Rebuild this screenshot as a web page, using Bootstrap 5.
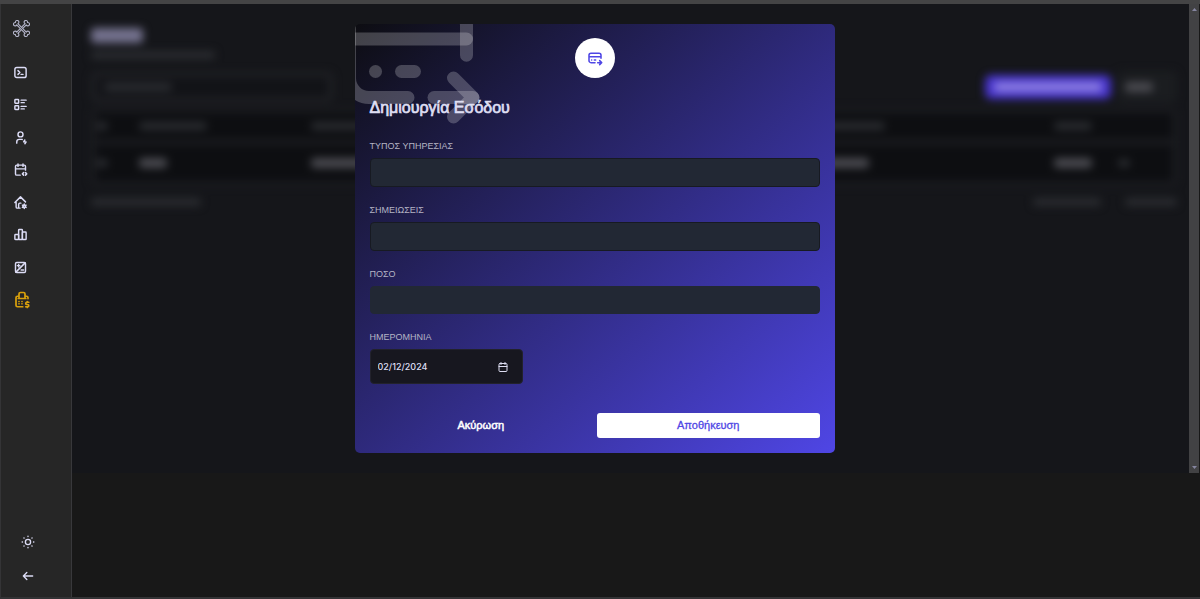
<!DOCTYPE html>
<html lang="el" data-bs-theme="dark">
<head>
<meta charset="utf-8">
<meta name="viewport" content="width=device-width, initial-scale=1">
<title>Δημιουργία Εσόδου</title>
<link href="https://cdn.jsdelivr.net/npm/bootstrap@5.3.0/dist/css/bootstrap.min.css" rel="stylesheet">
<style>
:root { --side: 72px; }
body { background: #181818; font-family: "Liberation Sans", Arial, sans-serif; font-size: 9px; line-height: 14px; border-top: 4px solid #444445; border-bottom: 2px solid #333335; }
.ico { fill: none; stroke: currentColor; stroke-width: 2.3; stroke-linecap: round; stroke-linejoin: round; display: block; }
.side { width: var(--side); background: #262626; border-left: 1px solid #343436; border-right: 1px solid #38383b; padding: 16px 12px 12px; z-index: 2; }
.side a { color: #dcdcf5; display: flex; align-items: center; }
.side a.active { color: #d8a00c; }
.side .brand { color: #b4b5ca; margin-bottom: 19px; }
.brand .ico { stroke-width: 1.3; }
.menu { display: grid; grid-auto-rows: 1fr; height: 260px; }
.stage { display: grid; grid-template-columns: minmax(0, 1fr) 10px; margin-right: 1px; align-self: flex-start; background: #15161a; }
.stage > * { grid-row: 1; }
.rail { grid-column: 2; background: #424244; color: #85859f; padding: 2px 0; }
.behind { grid-column: 1; padding: 24px 12px 0 19px; filter: blur(4px); overflow: hidden; }
.overlay { grid-column: 1; margin-left: calc(-1 * var(--side)); padding: 20px 0; z-index: 3; pointer-events: none; }
.dialog-box { width: 480px; max-width: 100%; padding: 14px 15px 15px; border-radius: 5px; overflow: hidden; position: relative; pointer-events: auto; background: linear-gradient(to bottom right, #0d0d12, #4f46e5); }
.watermark { position: absolute; left: -25px; top: -50px; stroke: rgba(255, 255, 255, .22); stroke-width: 2; }
.round-icon { width: 40px; height: 40px; background: #fff; color: #4f46e5; }
.dialog-box h1 { font-size: 16px; line-height: 20px; font-weight: 400; -webkit-text-stroke: 0.7px; color: #dedef2; margin: 20px 0 21px; position: relative; }
.dialog-box label { display: block; color: #b4b4c4; margin-bottom: 5px; }
.field { margin-bottom: 16px; }
.field .form-control { height: 29px; background: #222834; border: 1px solid #171a22; border-radius: 4px; font-size: 10px; padding: 0 7px; color: #dedef2; }
.field .amount-box { height: 28px; border-color: #222834; }
.field .date-box { width: 153px; height: 35px; background: #17171f; border-color: #22222c; font-family: Inter, sans-serif; font-size: 9px; font-weight: 500; color-scheme: dark; }
.date-box::-webkit-calendar-picker-indicator { width: 12px; height: 12px; padding: 0; margin-right: 6px; background: url("data:image/svg+xml,%3Csvg xmlns='http://www.w3.org/2000/svg' viewBox='0 0 24 24' fill='none' stroke='%23dedef2' stroke-width='2' stroke-linecap='round' stroke-linejoin='round'%3E%3Crect x='4' y='5' width='16' height='16' rx='2'/%3E%3Cpath d='M16 3v4M8 3v4M4 11h16'/%3E%3C/svg%3E") center / contain no-repeat; }
.actions { display: grid; grid-template-columns: 1fr 1fr; gap: 5px; margin-top: 29px; }
.actions .btn { height: 25px; padding: 0; border: 0; border-radius: 3px; font-size: 11px; font-weight: 400; line-height: 25px; color: #fff; -webkit-text-stroke: 0.5px; }
.actions .btn-save { background: #fff; color: #4f46e5; -webkit-text-stroke: 0.3px; }
.smudge { display: block; border-radius: 4px; height: 8px; background: #2a2c30; }
.smudge.bright { background: #4a4a50; height: 10px; }
.w20 { width: 12px; } .w30 { width: 28px; } .w40 { width: 38px; } .w50 { width: 52px; } .w60 { width: 68px; } .w110 { width: 110px; } .w125 { width: 124px; }
.smudge.heading { width: 52px; height: 15px; background: #74728e; }
.ghost-top { margin-top: 12px; }
.ghost-search { width: 242px; height: 30px; border: 5px solid #202125; border-radius: 6px; background: #121317; padding: 6px 8px; }
.ghost-add { width: 126px; height: 24px; border-radius: 6px; background: #4734cc; padding: 7px 9px; margin-right: 6px; }
.ghost-add .smudge { background: #8a7ce0; height: 10px; }
.ghost-more { width: 60px; height: 32px; border-radius: 6px; background: #1b1d20; padding: 11px 8px; }
.ghost-list { border: 5px solid #1b1c20; border-radius: 6px; margin-top: 5px; }
.ghost-row { display: grid; grid-template-columns: 4% 16% 47% 22% 6% 5%; align-items: center; background: #0d0e11; height: 26px; }
.ghost-row + .ghost-row { border-top: 6px solid #1b1c20; height: 42px; }
.ghost-foot { margin-top: 12px; }
</style>
</head>
<body class="min-vh-100 d-flex">
<nav class="side d-flex flex-column flex-shrink-0" aria-label="Main">
  <a class="brand" href="#" aria-label="Home"><svg class="ico" width="17" height="17" viewBox="2 2 20 20"><path transform="rotate(45 12 12)" d="M5 11H19a2 2 0 1 1 3 1 2 2 0 1 1-3 1H5a2 2 0 1 1-3-1 2 2 0 1 1 3-1z"/><path transform="rotate(-45 12 12)" d="M10 11H5a2 2 0 1 0-3 1 2 2 0 1 0 3 1h5M14 11h5a2 2 0 1 1 3 1 2 2 0 1 1-3 1h-5"/></svg></a>
  <div class="menu">
    <a href="#" aria-label="Terminal"><svg class="ico" width="15" height="15" viewBox="0 0 24 24"><path d="M8 9l3 3-3 3M13 15h3"/><rect x="3" y="4" width="18" height="16" rx="3"/></svg></a>
    <a href="#" aria-label="List"><svg class="ico" width="15" height="15" viewBox="0 0 24 24"><path d="M13 5h8M13 9h5M13 15h8M13 19h5"/><rect x="3" y="4" width="6" height="6" rx="1"/><rect x="3" y="14" width="6" height="6" rx="1"/></svg></a>
    <a href="#" aria-label="Users"><svg class="ico" width="15" height="15" viewBox="0 0 24 24"><path d="M8 7a4 4 0 1 0 8 0 4 4 0 0 0-8 0M6 21v-2a4 4 0 0 1 4-4h4c.27 0 .53.03.78.08M19 16l-2 3h4l-2 3"/></svg></a>
    <a href="#" aria-label="Calendar"><svg class="ico" width="15" height="15" viewBox="0 0 24 24"><path d="M11.500 21H6a2 2 0 0 1-2-2V7a2 2 0 0 1 2-2h12a2 2 0 0 1 2 2v6M16 3v4M8 3v4M4 11h16M20 21l2-2-2-2M17 17l-2 2 2 2"/></svg></a>
    <a href="#" aria-label="Property"><svg class="ico" width="15" height="15" viewBox="0 0 24 24"><path d="M9 21v-6a2 2 0 0 1 2-2h1.600M20 11l-8-8-9 9h2v7a2 2 0 0 0 2 2h4.200"/><circle cx="18" cy="18" r="2"/><path d="M18 14.500V16M18 20v1.500M21 16.300l-1.300.7M16.300 19l-1.300.8M15 16.300l1.300.7M19.700 19l1.300.8"/></svg></a>
    <a href="#" aria-label="Statistics"><svg class="ico" width="15" height="15" viewBox="0 0 24 24"><rect x="3" y="12" width="6" height="8" rx="1"/><rect x="9" y="4" width="6" height="16" rx="1"/><rect x="15" y="8" width="6" height="12" rx="1"/></svg></a>
    <a href="#" aria-label="Balance"><svg class="ico" width="15" height="15" viewBox="0 0 24 24"><rect x="4" y="4" width="16" height="16" rx="2"/><path d="M4.600 19.400 19.400 4.600M7 9h4M9 7v4M13 16h4"/></svg></a>
    <a class="active" href="#" aria-label="Income" aria-current="page"><svg class="ico" width="18" height="18" viewBox="0 0 24 24"><path d="M21 15h-2.500a1.500 1.500 0 0 0 0 3h1a1.500 1.500 0 0 1 0 3H17M19 21v1M19 14v1M13 21H6a2 2 0 0 1-2-2V9a2 2 0 0 1 2-2h2M20 10.120V9a2 2 0 0 0-2-2h-2M16 10V4a2 2 0 0 0-2-2h-4a2 2 0 0 0-2 2v6M7 10h10M8 14v.010M8 17v.010M12 14v.010M12 17v.010"/></svg></a>
  </div>
  <div class="mt-auto d-flex flex-column ps-2 gap-3">
    <a href="#" aria-label="Theme"><svg class="ico" width="14" height="18" viewBox="0 0 24 24"><circle cx="12" cy="12" r="4.500"/><path d="M12 2v.5M12 21.500v.5M2 12h.5M21.500 12h.5M5 5l.3.3M18.700 18.700l.3.3M19 5l-.3.300M5.300 18.700l-.3.300"/></svg></a>
    <a href="#" aria-label="Back"><svg class="ico" width="14" height="18" viewBox="0 0 24 24"><path d="M4 12h16M4 12l6 6M4 12l6-6"/></svg></a>
  </div>
</nav>
<main class="stage flex-grow-1">
  <div class="behind" aria-hidden="true">
    <span class="smudge heading"></span>
    <span class="smudge w125 mt-2"></span>
    <div class="ghost-top d-flex align-items-center">
      <div class="ghost-search me-auto"><span class="smudge w60"></span></div>
      <div class="ghost-add"><span class="smudge"></span></div>
      <div class="ghost-more"><span class="smudge bright w30"></span></div>
    </div>
    <div class="ghost-list">
      <div class="ghost-row"><span class="smudge w20"></span><span class="smudge w60"></span><span class="smudge w60"></span><span class="smudge w60"></span><span class="smudge w40"></span></div>
      <div class="ghost-row"><span class="smudge w20"></span><span class="smudge bright w30"></span><span class="smudge bright w60"></span><span class="smudge bright w50"></span><span class="smudge bright w40"></span><span class="smudge w20"></span></div>
    </div>
    <div class="ghost-foot d-flex align-items-center gap-4">
      <span class="smudge w110 me-auto"></span><span class="smudge w60"></span><span class="smudge w50"></span>
    </div>
  </div>
  <div class="rail d-flex flex-column justify-content-between align-items-center" aria-hidden="true"><svg width="5" height="6" viewBox="0 0 5 6"><path d="M0 5h5L2.500 2z" fill="currentColor"/></svg><svg width="5" height="6" viewBox="0 0 5 6"><path d="M0 1h5L2.500 4z" fill="currentColor"/></svg></div>
  <div class="overlay d-flex justify-content-center">
    <form class="dialog-box" role="dialog" aria-labelledby="dlg-title">
      <svg class="ico watermark" width="156" height="156" viewBox="0 0 24 24" aria-hidden="true"><path d="M12 19H6a3 3 0 0 1-3-3V8a3 3 0 0 1 3-3h12a3 3 0 0 1 3 3v4.500"/><path d="M3 10h18"/><path d="M16 19h6"/><path d="M19 16l3 3-3 3"/><path d="M7 15h.010"/><path d="M11 15h2"/></svg>
      <div class="round-icon rounded-circle d-flex align-items-center justify-content-center mx-auto"><svg class="ico" width="16" height="16" viewBox="0 0 24 24"><path d="M12 19H6a3 3 0 0 1-3-3V8a3 3 0 0 1 3-3h12a3 3 0 0 1 3 3v4.500M3 10h18M16 19h6M19 16l3 3-3 3M7 15h.010M11 15h2"/></svg></div>
      <h1 id="dlg-title">Δημιουργία Εσόδου</h1>
      <div class="field"><label for="service">ΤΥΠΟΣ ΥΠΗΡΕΣΙΑΣ</label><input class="form-control" id="service" type="text"></div>
      <div class="field"><label for="notes">ΣΗΜΕΙΩΣΕΙΣ</label><input class="form-control" id="notes" type="text"></div>
      <div class="field"><label for="amount">ΠΟΣΟ</label><input class="form-control amount-box" id="amount" type="text" inputmode="decimal"></div>
      <div class="field"><label for="day">ΗΜΕΡΟΜΗΝΙΑ</label><input class="form-control date-box" id="day" type="date" value="2024-02-12"></div>
      <div class="actions"><button class="btn" type="button">Ακύρωση</button><button class="btn btn-save" type="submit">Αποθήκευση</button></div>
    </form>
  </div>
</main>
<script src="https://cdn.jsdelivr.net/npm/bootstrap@5.3.0/dist/js/bootstrap.bundle.min.js"></script>
</body>
</html>
